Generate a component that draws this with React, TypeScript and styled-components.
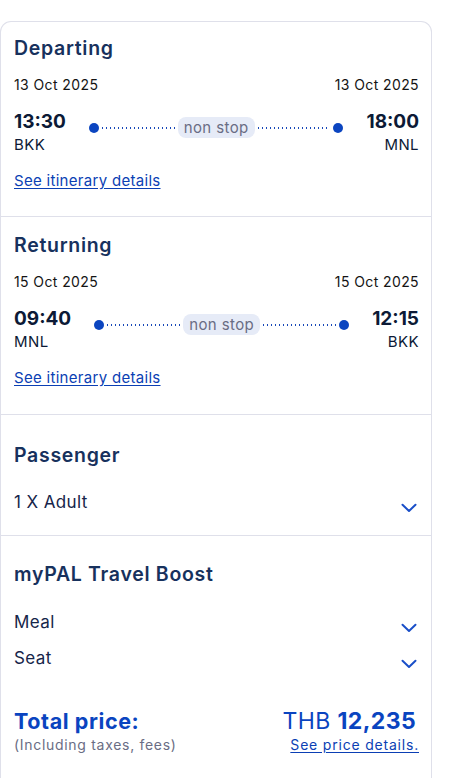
import React from "react";
import styled, { createGlobalStyle } from "styled-components";

const GlobalStyle = createGlobalStyle`
  html, body { margin: 0; padding: 0; background: #ffffff; }
  body { font-family: Inter, "Open Sans", "Liberation Sans", sans-serif; -webkit-font-smoothing: antialiased; }
  * { box-sizing: border-box; }
`;

const Page = styled.div`
  width: 465px;
  height: 778px;
  padding-top: 21px;
  overflow: hidden;
`;

const Card = styled.div`
  width: 432px;
  height: 800px;
  border: 1px solid #dfe0ea;
  border-bottom: none;
  border-radius: 11px 11px 0 0;
  background: #fff;
`;

const Section = styled.section<{ $top: number; $height: number; $last?: boolean }>`
  height: ${(p) => p.$height}px;
  padding: ${(p) => p.$top}px 12px 0 13px;
  border-bottom: ${(p) => (p.$last ? "none" : "1px solid #dfe0ea")};
  display: flex;
  flex-direction: column;
`;

const Title = styled.h2`
  margin: 0;
  font-size: 19.5px;
  line-height: 24px;
  font-weight: 600;
  color: #17315d;
  letter-spacing: 0.7px;
`;

const DateRow = styled.div`
  margin-top: 15px;
  display: flex;
  justify-content: space-between;
  font-size: 14px;
  line-height: 20px;
  color: #141414;
  letter-spacing: 0.4px;
`;

const TimeRow = styled.div`
  margin-top: 15px;
  display: flex;
  align-items: flex-start;
`;

const Endpoint = styled.div<{ $right?: boolean }>`
  display: flex;
  flex-direction: column;
  align-items: ${(p) => (p.$right ? "flex-end" : "flex-start")};
`;

const Time = styled.div`
  font-size: 19px;
  line-height: 24px;
  font-weight: 700;
  color: #0c1a36;
`;

const Code = styled.div`
  margin-top: 1px;
  font-size: 15px;
  line-height: 20px;
  color: #0c1a36;
  letter-spacing: 0.4px;
`;

const Connector = styled.div`
  flex: 1;
  margin: 7px 23px 0;
  display: flex;
  align-items: center;
  height: 21px;
`;

const Dot = styled.span`
  width: 10px;
  height: 10px;
  border-radius: 50%;
  background: #0b45c0;
  flex: none;
`;

const Dotted = styled.span`
  flex: 1;
  height: 2px;
  margin: 0 3px;
  background-image: linear-gradient(to right, #1848b8 0 1.5px, transparent 1.5px);
  background-size: 4px 1.5px;
  background-repeat: repeat-x;
  background-position: left center;
`;

const Pill = styled.span`
  flex: none;
  height: 21px;
  padding: 0 6px;
  border-radius: 8px;
  background: #e6ebf7;
  color: #6a6d84;
  font-size: 15px;
  line-height: 21px;
  letter-spacing: 0.4px;
`;

const Link = styled.a`
  margin-top: 16px;
  align-self: flex-start;
  font-size: 15px;
  line-height: 20px;
  color: #0b3fb4;
  text-decoration: underline;
  text-underline-offset: 2px;
  letter-spacing: 0.3px;
  cursor: pointer;
`;

const Item = styled.div<{ $gap: number }>`
  margin-top: ${(p) => p.$gap}px;
  display: flex;
  justify-content: space-between;
  align-items: flex-start;
  padding-right: 2px;
`;

const ItemLabel = styled.span`
  font-size: 17px;
  line-height: 22px;
  color: #16254a;
  letter-spacing: 0.4px;
`;

const Chevron = styled.svg`
  margin-top: 12px;
  width: 16px;
  height: 10px;
  flex: none;
`;

const PriceRow = styled.div`
  margin-top: 39px;
  display: flex;
  justify-content: space-between;
  align-items: flex-start;
`;

const PriceCol = styled.div<{ $right?: boolean }>`
  display: flex;
  flex-direction: column;
  align-items: ${(p) => (p.$right ? "flex-end" : "flex-start")};
`;

const TotalLabel = styled.div`
  font-size: 21.5px;
  line-height: 26px;
  font-weight: 700;
  color: #0a44c0;
  letter-spacing: 0.6px;
`;

const Amount = styled.div`
  font-size: 23px;
  line-height: 26px;
  color: #0a44c0;
  padding-right: 3px;
  letter-spacing: 0.4px;
  b { font-weight: 700; }
`;

const Note = styled.div`
  margin-top: 1px;
  font-size: 14px;
  line-height: 20px;
  color: #6a6d84;
  letter-spacing: 0.7px;
`;

const PriceLink = styled(Link)`
  margin-top: 1px;
  align-self: flex-end;
  font-size: 14px;
  line-height: 20px;
  letter-spacing: 0.8px;
`;

const Down = () => (
  <Chevron viewBox="0 0 16 10" fill="none">
    <path d="M1.5 1.8 L8 8 L14.5 1.8" stroke="#1a4fc8" strokeWidth="2" strokeLinecap="round" strokeLinejoin="round" />
  </Chevron>
);

type Leg = {
  title: string;
  date: string;
  from: string;
  to: string;
  dep: string;
  arr: string;
};

const Flight = ({ leg, top, height }: { leg: Leg; top: number; height: number }) => (
  <Section $top={top} $height={height}>
    <Title>{leg.title}</Title>
    <DateRow>
      <span>{leg.date}</span>
      <span>{leg.date}</span>
    </DateRow>
    <TimeRow>
      <Endpoint>
        <Time>{leg.dep}</Time>
        <Code>{leg.from}</Code>
      </Endpoint>
      <Connector>
        <Dot />
        <Dotted />
        <Pill>non stop</Pill>
        <Dotted />
        <Dot />
      </Connector>
      <Endpoint $right>
        <Time>{leg.arr}</Time>
        <Code>{leg.to}</Code>
      </Endpoint>
    </TimeRow>
    <Link>See itinerary details</Link>
  </Section>
);

export default function App() {
  return (
    <Page>
      <GlobalStyle />
      <Card>
        <Flight
          top={14}
          height={195}
          leg={{ title: "Departing", date: "13 Oct 2025", from: "BKK", to: "MNL", dep: "13:30", arr: "18:00" }}
        />
        <Flight
          top={16}
          height={198}
          leg={{ title: "Returning", date: "15 Oct 2025", from: "MNL", to: "BKK", dep: "09:40", arr: "12:15" }}
        />
        <Section $top={28} $height={121}>
          <Title>Passenger</Title>
          <Item $gap={24}>
            <ItemLabel>1 X Adult</ItemLabel>
            <Down />
          </Item>
        </Section>
        <Section $top={26} $last $height={260}>
          <Title>myPAL Travel Boost</Title>
          <Item $gap={25}>
            <ItemLabel>Meal</ItemLabel>
            <Down />
          </Item>
          <Item $gap={14}>
            <ItemLabel>Seat</ItemLabel>
            <Down />
          </Item>
          <PriceRow>
            <PriceCol>
              <TotalLabel>Total price:</TotalLabel>
              <Note>(Including taxes, fees)</Note>
            </PriceCol>
            <PriceCol $right>
              <Amount>
                THB <b>12,235</b>
              </Amount>
              <PriceLink>See price details.</PriceLink>
            </PriceCol>
          </PriceRow>
        </Section>
      </Card>
    </Page>
  );
}
